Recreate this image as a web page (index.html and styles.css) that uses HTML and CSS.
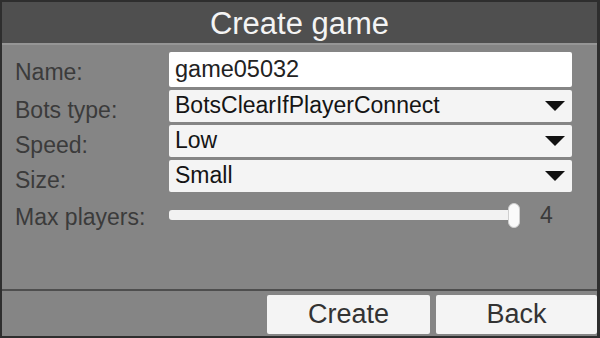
FILE: index.html
```html
<!DOCTYPE html>
<html lang="en">
<head>
    <meta charset="UTF-8">
    <meta name="viewport" content="width=device-width, initial-scale=1.0">
    <title>Create game</title>
    <link rel="stylesheet" href="styles.css">
</head>
<body>
    <div class="window">
        <div class="header">Create game</div>

        <div class="form">
            <label class="label">Name:</label>
            <div class="field first">
                <input class="text-input" type="text" value="game05032">
            </div>

            <label class="label">Bots type:</label>
            <div class="field">
                <div class="dropdown">BotsClearIfPlayerConnect<span class="arrow"></span></div>
            </div>

            <label class="label">Speed:</label>
            <div class="field">
                <div class="dropdown">Low<span class="arrow"></span></div>
            </div>

            <label class="label">Size:</label>
            <div class="field">
                <div class="dropdown">Small<span class="arrow"></span></div>
            </div>

            <label class="label slider-label">Max players:</label>
            <div class="field slider-row">
                <div class="track">
                    <div class="knob"></div>
                </div>
                <span class="value">4</span>
            </div>
        </div>

        <div class="footer">
            <button class="btn">Create</button>
            <button class="btn">Back</button>
        </div>
    </div>
</body>
</html>
```

FILE: styles.css
```css
* {
    box-sizing: border-box;
}
body {
    margin: 0;
    font-family: "Liberation Sans", Arial, sans-serif;
    background: #2b2b2b;
}
.window {
    width: 600px;
    height: 338px;
    border: 2px solid #2e2e2e;
    border-right-width: 3px;
    background: #858585;
    display: flex;
    flex-direction: column;
}
.header {
    height: 43px;
    background: #4f4f4f;
    border-bottom: 2px solid #969696;
    color: #f4f4f4;
    font-size: 31px;
    line-height: 44px;
    text-align: center;
}
.form {
    flex: 1;
    display: grid;
    grid-template-columns: 154px 403px;
    row-gap: 3px;
    padding: 7px 0 0 13px;
    align-content: start;
}
.label {
    color: #3b3b3b;
    font-size: 23px;
    display: flex;
    align-items: center;
    height: 32px;
    padding-top: 8px;
}
.field {
    height: 32px;
}
.field.first {
    height: 35px;
}
.text-input {
    width: 100%;
    height: 100%;
    border: none;
    border-radius: 2px;
    background: #ffffff;
    padding: 0 6px;
    font-family: inherit;
    font-size: 23.5px;
    color: #222;
    outline: none;
}
.dropdown {
    position: relative;
    height: 100%;
    background: #f4f4f4;
    border-radius: 2px;
    padding: 0 6px;
    font-size: 23px;
    line-height: 30px;
    color: #151515;
}
.arrow {
    position: absolute;
    right: 7px;
    top: 11px;
    width: 0;
    height: 0;
    border-left: 10px solid transparent;
    border-right: 10px solid transparent;
    border-top: 10px solid #111;
}
.slider-label {
    margin-top: 2px;
}
.slider-row {
    margin-top: 4px;
    display: flex;
    align-items: center;
}
.track {
    position: relative;
    width: 347px;
    height: 10px;
    background: #f2f2f2;
    border-radius: 3px;
}
.knob {
    position: absolute;
    right: -4px;
    top: -7px;
    width: 12px;
    height: 25px;
    border-radius: 6px;
    background: #fafafa;
    border: 1px solid #cfcfcf;
}
.value {
    margin-left: 24px;
    font-size: 23px;
    color: #3b3b3b;
}
.footer {
    height: 47px;
    border-top: 2px solid #4e4e4e;
    display: flex;
    justify-content: flex-end;
    gap: 6px;
    padding-top: 4px;
}
.btn {
    width: 163px;
    height: 39px;
    background: #f4f4f4;
    border: none;
    border-radius: 2px;
    font-family: inherit;
    font-size: 27px;
    color: #333;
    padding: 0;
}
.btn:last-child {
    width: 161px;
}
```
